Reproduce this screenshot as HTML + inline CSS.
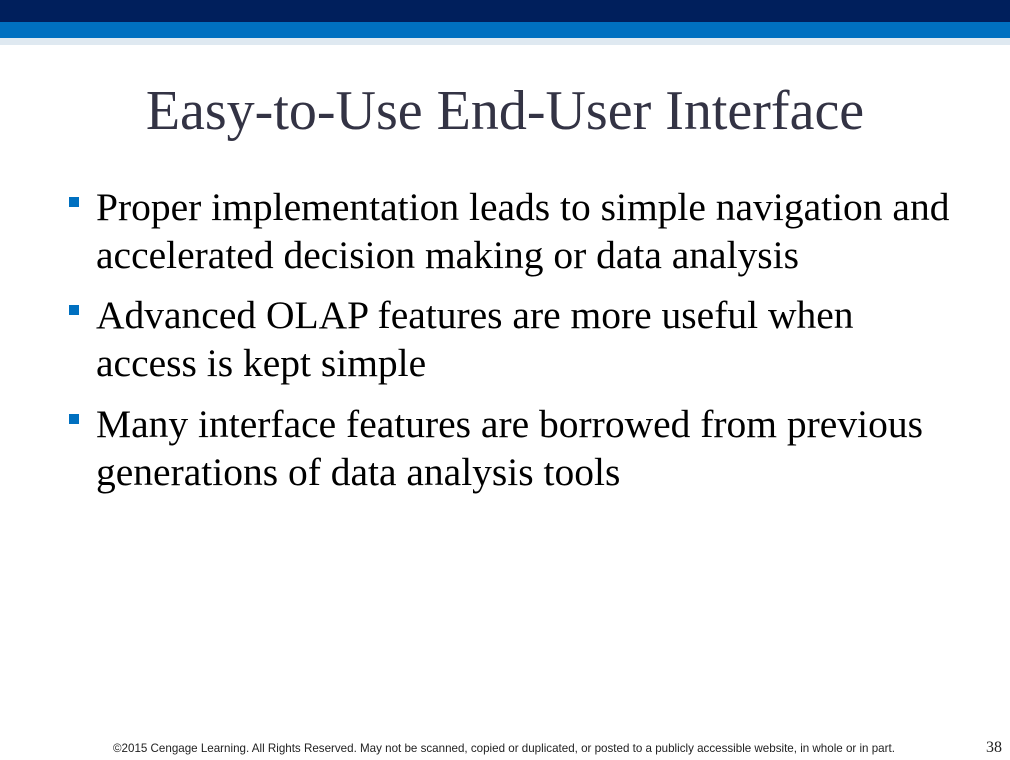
<!DOCTYPE html>
<html><head><style>
body{margin:0;width:1010px;height:760px;background:#fff;position:relative;overflow:hidden;font-family:"Liberation Serif",serif}
.b1{position:absolute;left:0;top:0;width:1010px;height:22px;background:#001f5c}
.b2{position:absolute;left:0;top:22px;width:1010px;height:16px;background:#0070c0}
.b3{position:absolute;left:0;top:38px;width:1010px;height:7px;background:#dfe9f1}
h1{position:absolute;left:0;width:1010px;top:76px;margin:0;text-align:center;font-weight:normal;font-size:56px;color:#333344;line-height:70px;white-space:nowrap}
.it{position:absolute;left:96px;font-size:39.5px;line-height:48px;color:#000;width:900px;white-space:nowrap}
.sq{position:absolute;left:69px;width:10px;height:10px;background:#0070c0}
.ft{position:absolute;top:742px;left:113px;font-family:"Liberation Sans",sans-serif;font-size:11.6px;color:#222;white-space:nowrap}
.pn{position:absolute;top:739px;left:986px;font-size:16px;color:#222}
</style></head><body>
<div class="b1"></div><div class="b2"></div><div class="b3"></div>
<h1>Easy-to-Use End-User Interface</h1>
<div class="sq" style="top:197px"></div>
<div class="it" style="top:183px">Proper implementation leads to simple navigation and<br>accelerated decision making or data analysis</div>
<div class="sq" style="top:305px"></div>
<div class="it" style="top:291px">Advanced OLAP features are more useful when<br>access is kept simple</div>
<div class="sq" style="top:414px"></div>
<div class="it" style="top:400px">Many interface features are borrowed from previous<br>generations of data analysis tools</div>
<div class="ft">©2015 Cengage Learning. All Rights Reserved. May not be scanned, copied or duplicated, or posted to a publicly accessible website, in whole or in part.</div>
<div class="pn">38</div>
</body></html>
